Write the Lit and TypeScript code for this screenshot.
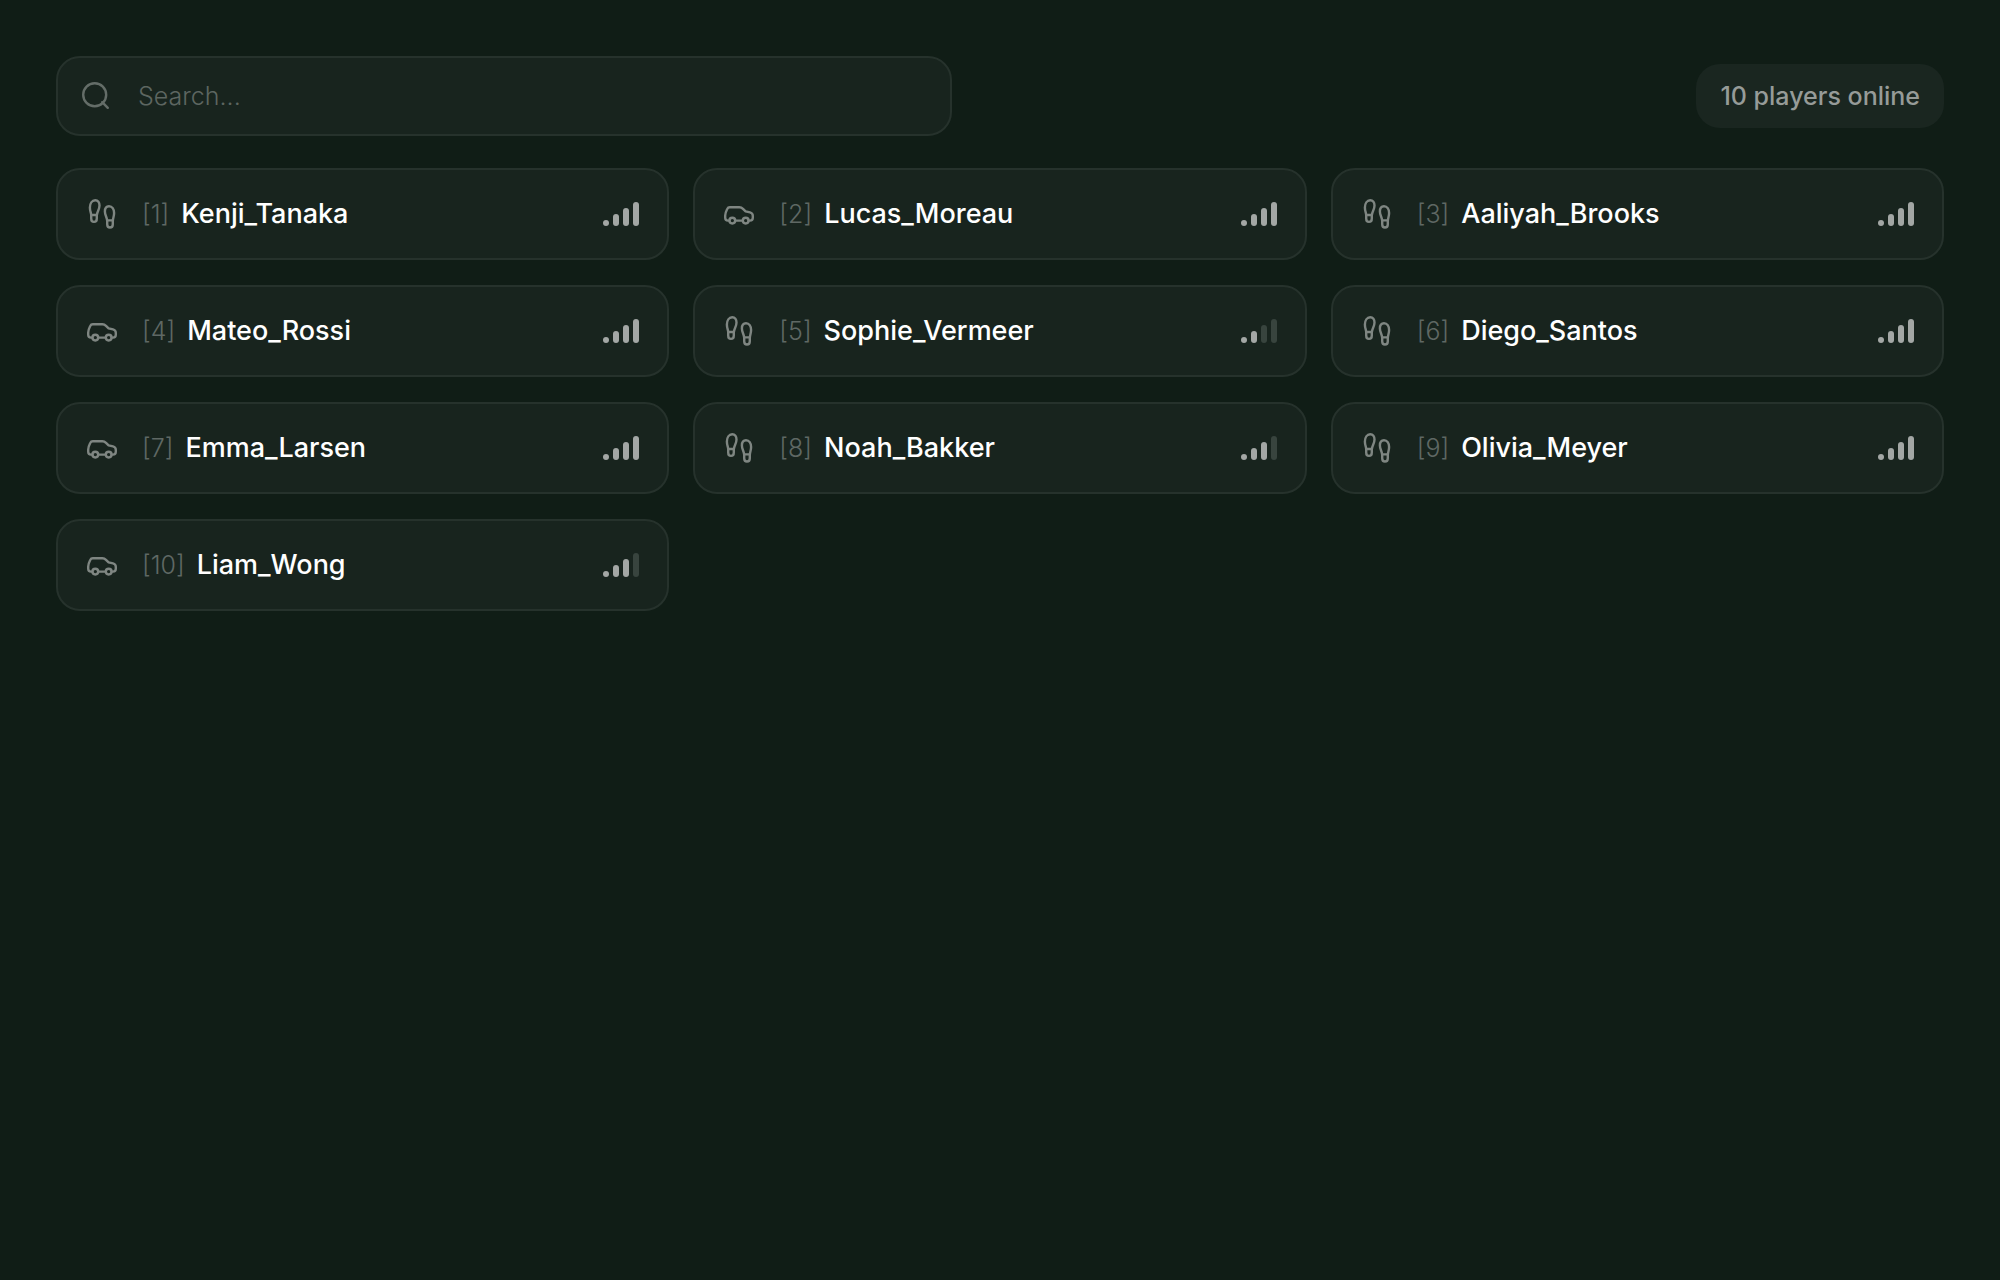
import { LitElement, html, css, svg } from "lit";
import { customElement, property, state } from "lit/decorators.js";

interface Player {
  id: number;
  name: string;
  mode: "foot" | "car";
  signal: number;
}

const players: Player[] = [
  { id: 1, name: "Kenji_Tanaka", mode: "foot", signal: 4 },
  { id: 2, name: "Lucas_Moreau", mode: "car", signal: 4 },
  { id: 3, name: "Aaliyah_Brooks", mode: "foot", signal: 4 },
  { id: 4, name: "Mateo_Rossi", mode: "car", signal: 4 },
  { id: 5, name: "Sophie_Vermeer", mode: "foot", signal: 2 },
  { id: 6, name: "Diego_Santos", mode: "foot", signal: 4 },
  { id: 7, name: "Emma_Larsen", mode: "car", signal: 4 },
  { id: 8, name: "Noah_Bakker", mode: "foot", signal: 3 },
  { id: 9, name: "Olivia_Meyer", mode: "foot", signal: 4 },
  { id: 10, name: "Liam_Wong", mode: "car", signal: 3 },
];

const footIcon = svg`
  <path d="M5.2 17C5 14.5 3.9 13 3.9 9.5C3.9 5.5 6 2.2 9.2 2.2C12 2.2 13.5 4.6 13.5 7.6C13.5 11.5 11.2 13.5 10.9 17Z"/>
  <path d="M5.2 17V20.4C5.2 25 10.8 25 10.8 20.4V17"/>
  <path d="M21.1 22.4C20.8 19 18.9 17 18.9 13.5C18.9 10.4 20.4 8.2 23 8.2C26.2 8.2 28.1 11.5 28.1 15C28.1 18.5 27 20 26.9 22.4Z"/>
  <path d="M21.2 22.4V26.2C21.2 30.6 26.8 30.6 26.8 26.2V22.4"/>`;

const carIcon = svg`
  <path d="M6.4 22.6H5C3 22.6 2.2 21.8 2.2 19.8V17.4C2.2 15.4 3.2 13 4.2 11C4.8 9.7 5.4 9.2 6.8 9.2H16.4C18 9.2 18.8 9.6 20 10.8L22.6 13.3L27 14.4C29.2 15 29.8 16 29.8 17.8V19.8C29.8 21.8 29 22.6 27 22.6H25.6"/>
  <path d="M12.2 22.6H19.8"/>
  <circle cx="9.3" cy="22.6" r="2.9"/>
  <circle cx="22.7" cy="22.6" r="2.9"/>`;

@customElement("player-card")
export class PlayerCard extends LitElement {
  @property({ attribute: false }) player!: Player;

  static styles = css`
    :host {
      display: flex;
      align-items: center;
      box-sizing: border-box;
      padding: 28px;
      border: 2px solid #26322c;
      border-radius: 24px;
      background: #18241e;
      line-height: 32px;
    }
    .mode {
      flex: none;
      width: 32px;
      height: 32px;
      margin-right: 24px;
      fill: none;
      stroke: #7f8682;
      stroke-width: 2.4;
      stroke-linejoin: round;
      stroke-linecap: round;
    }
    .id {
      margin-right: 12px;
      font-size: 25px;
      font-weight: 300;
      color: #5f6864;
    }
    .name {
      flex: 1;
      min-width: 0;
      overflow: hidden;
      text-overflow: ellipsis;
      white-space: nowrap;
      font-size: 27px;
      font-weight: 500;
      color: #ffffff;
    }
    .signal {
      display: flex;
      align-items: flex-end;
      gap: 4px;
    }
    .bar {
      width: 6px;
      border-radius: 3px;
      background: #38443e;
    }
    .bar.on { background: #a3a7a5; }
    .b1 { height: 6px; }
    .b2 { height: 12px; }
    .b3 { height: 18px; }
    .b4 { height: 24px; }
  `;

  render() {
    const p = this.player;
    return html`
      <svg class="mode" viewBox="0 0 32 32" aria-hidden="true">
        ${p.mode === "foot" ? footIcon : carIcon}
      </svg>
      <span class="id">[${p.id}]</span>
      <span class="name">${p.name}</span>
      <span class="signal">
        ${[1, 2, 3, 4].map((n) => html`<span class="bar b${n} ${n <= p.signal ? "on" : ""}"></span>`)}
      </span>
    `;
  }
}

@customElement("app-root")
export class AppRoot extends LitElement {
  @state() private query = "";

  static styles = css`
    :host {
      display: block;
      box-sizing: border-box;
      min-height: 100vh;
      padding: 56px;
      background: #101d16;
      font-family: Inter, "Liberation Sans", sans-serif;
    }
    .top {
      display: flex;
      align-items: center;
      justify-content: space-between;
      gap: 24px;
      margin-bottom: 32px;
    }
    .search {
      display: flex;
      align-items: center;
      gap: 26px;
      box-sizing: border-box;
      width: 100%;
      max-width: 896px;
      padding: 20px 22px;
      border: 2px solid #26322c;
      border-radius: 24px;
      background: #18241e;
    }
    .glass {
      flex: none;
      width: 32px;
      height: 32px;
      fill: none;
      stroke: #646d68;
      stroke-width: 2.4;
      stroke-linecap: round;
    }
    .field {
      flex: 1;
      min-width: 0;
      height: 36px;
      padding: 0;
      border: 0;
      outline: 0;
      background: transparent;
      font-family: inherit;
      font-size: 25px;
      font-weight: 300;
      line-height: 36px;
      color: #ffffff;
    }
    .field::placeholder {
      color: #5d6661;
      opacity: 1;
    }
    .count {
      flex: none;
      padding: 14px 24px;
      border-radius: 24px;
      background: #1a2620;
      font-size: 25px;
      font-weight: 500;
      line-height: 36px;
      color: #969b98;
    }
    .grid {
      display: grid;
      grid-template-columns: repeat(3, minmax(0, 1fr));
      gap: 25px 24px;
    }
  `;

  render() {
    const q = this.query.toLowerCase();
    const shown = players.filter((p) => `${p.id} ${p.name}`.toLowerCase().includes(q));
    return html`
      <div class="top">
        <label class="search">
          <svg class="glass" viewBox="0 0 32 32" aria-hidden="true">
            <circle cx="14.7" cy="14.7" r="11.5" />
            <path d="M22.2 22.2L27.8 27.8" />
          </svg>
          <input
            class="field"
            type="text"
            placeholder="Search..."
            aria-label="Search"
            .value=${this.query}
            @input=${(e: Event) => (this.query = (e.target as HTMLInputElement).value)}
          />
        </label>
        <div class="count">${players.length} players online</div>
      </div>
      <div class="grid">
        ${shown.map((p) => html`<player-card .player=${p}></player-card>`)}
      </div>
    `;
  }
}
